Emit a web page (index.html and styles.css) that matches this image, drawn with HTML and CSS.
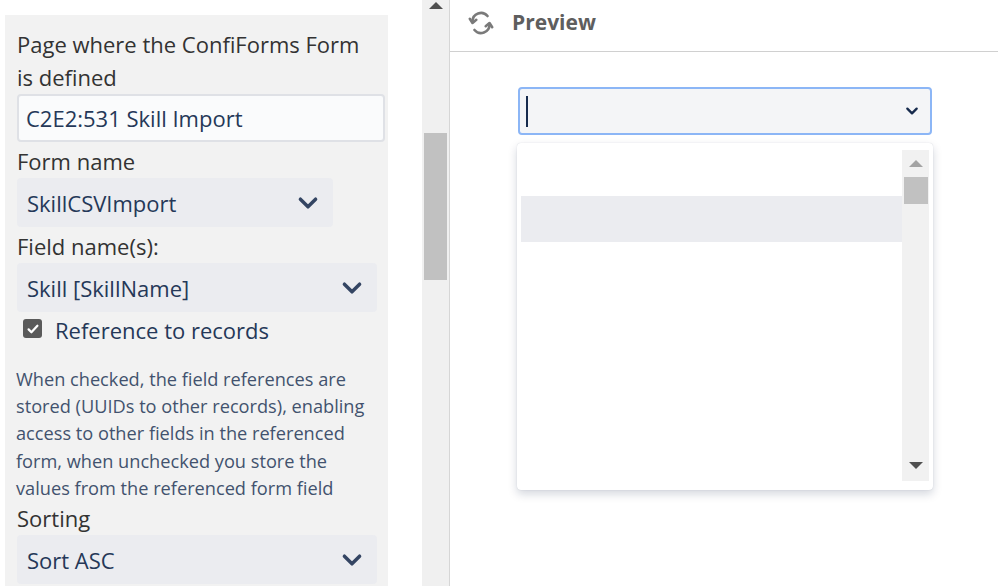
FILE: index.html
```html
<!DOCTYPE html>
<html lang="en">
<head>
<meta charset="utf-8">
<title>ConfiForms field</title>
<link rel="stylesheet" href="styles.css">
</head>
<body>
<div class="app">
  <aside class="sidebar">
    <div class="panel-wrap">
      <div class="panel">
        <div class="label label-first">Page where the ConfiForms Form is defined</div>
        <div class="input">C2E2:531 Skill Import</div>
        <div class="label">Form name</div>
        <div class="select select-short"><span>SkillCSVImport</span><svg class="chev" viewBox="0 0 24 24"><path d="M5 8.5l7 7 7-7"/></svg></div>
        <div class="label">Field name(s):</div>
        <div class="select"><span>Skill [SkillName]</span><svg class="chev" viewBox="0 0 24 24"><path d="M5 8.5l7 7 7-7"/></svg></div>
        <label class="check-row"><span class="checkbox"><svg viewBox="0 0 20 20"><path d="M4.5 10.5l3.5 3.5 7.5-8"/></svg></span><span>Reference to records</span></label>
        <p class="desc">When checked, the field references are stored (UUIDs to other records), enabling access to other fields in the referenced form, when unchecked you store the values from the referenced form field</p>
        <div class="label label-sort">Sorting</div>
        <div class="select"><span>Sort ASC</span><svg class="chev" viewBox="0 0 24 24"><path d="M5 8.5l7 7 7-7"/></svg></div>
      </div>
    </div>
    <div class="scrollbar">
      <div class="sb-up"></div>
      <div class="sb-thumb"></div>
    </div>
  </aside>
  <main class="preview">
    <header class="preview-head">
      <svg class="refresh" viewBox="0 0 26 26"><path d="M4.5 11.5 A8.5 8.5 0 0 1 19.5 6"/><path d="M1.8 8.8 L4.5 13 L8.3 9.8"/><path d="M21.5 14.5 A8.5 8.5 0 0 1 6.5 20"/><path d="M24.2 17.2 L21.5 13 L17.7 16.2"/></svg>
      <h1>Preview</h1>
    </header>
    <div class="preview-body">
      <div class="combo"><span class="caret"></span><svg class="chev-sm" viewBox="0 0 24 24"><path d="M5 8.5l7 7 7-7"/></svg></div>
      <div class="menu">
        <div class="menu-list">
          <div class="opt"></div>
          <div class="opt opt-hover"></div>
        </div>
        <div class="menu-sb">
          <div class="msb-up"></div>
          <div class="msb-thumb"></div>
          <div class="msb-fill"></div>
          <div class="msb-down"></div>
        </div>
      </div>
    </div>
  </main>
</div>
</body>
</html>
```
FILE: styles.css
```css
* { box-sizing: border-box; }
html, body { margin: 0; padding: 0; background: #fff; }
body { font-family: "Open Sans", "Noto Sans", sans-serif; width: 998px; height: 586px; overflow: hidden; }
.app { display: flex; height: 586px; }
.sidebar { width: 450px; flex: none; display: flex; border-right: 1px solid #d6d6d6; }
.panel-wrap { padding: 15px 0 0 5px; width: 422px; }
.panel { width: 383px; height: 100%; background: #f2f2f2; padding: 13px 4px 0 12px; }
.label { font-size: 22px; line-height: 33px; color: #333; margin-top: 3px; max-width: 362px; }
.label-first { margin-top: 0; }
.label-sort { margin-top: 0; }
.input { height: 48px; background: #fafbfc; border: 2px solid #dfe1e6; border-radius: 4px; padding: 0 7px; font-size: 22px; line-height: 44px; color: #253858; width: 368px; }
.select { height: 49px; width: 360px; background: #ebecf0; border-radius: 4px; display: flex; align-items: center; justify-content: space-between; padding: 0 12px 0 10px; font-size: 22px; color: #253858; }
.select-short { width: 316px; }
.chev { width: 26px; height: 26px; fill: none; stroke: #344563; stroke-width: 3.2; stroke-linecap: round; stroke-linejoin: round; }
.check-row { display: flex; align-items: center; height: 34px; padding-left: 6px; gap: 13px; font-size: 22px; color: #253858; margin-top: 1px; }
.checkbox { width: 19px; height: 19px; background: #5a5a5a; border-radius: 3px; display: flex; align-items: center; justify-content: center; margin-top: -3px; }
.checkbox svg { width: 16px; height: 16px; fill: none; stroke: #fff; stroke-width: 2.8; stroke-linecap: round; stroke-linejoin: round; }
.desc { margin: 19px 0 0 -1px; font-size: 18.2px; line-height: 27.2px; color: #42526e; width: 362px; }
.scrollbar { width: 27px; background: #f0f0f0; display: flex; flex-direction: column; align-items: center; }
.sb-up { width: 0; height: 0; border-left: 7px solid transparent; border-right: 7px solid transparent; border-bottom: 7px solid #505050; margin-top: 2px; }
.sb-thumb { width: 23px; height: 147px; background: #c1c1c1; margin-top: 124px; }
.preview { flex: 1; }
.preview-head { height: 52px; border-bottom: 1px solid #d0d0d0; display: flex; align-items: center; padding-left: 18px; gap: 18px; }
.refresh { width: 26px; height: 26px; fill: none; stroke: #7a7a7a; stroke-width: 2.6; stroke-linecap: round; stroke-linejoin: round; margin-top: -6px; }
.preview-head h1 { margin: 0; font-size: 21px; font-weight: 700; color: #5e5e5e; margin-top: -8px; }
.preview-body { padding: 36px 0 0 68px; }
.combo { width: 414px; height: 48px; border: 2px solid #8cb6f6; border-radius: 4px; background: #f4f5f7; display: flex; align-items: center; justify-content: space-between; padding: 0 10px 0 6px; margin-top: -1px; }
.caret { width: 1.5px; height: 31px; background: #172b4d; }
.chev-sm { width: 16px; height: 16px; fill: none; stroke: #172b4d; stroke-width: 3.5; stroke-linecap: round; stroke-linejoin: round; }
.menu { margin: 8px 0 0 -1px; width: 416px; height: 347px; background: #fff; border-radius: 4px; box-shadow: 0 4px 10px rgba(9,30,66,0.18), 0 0 1px rgba(9,30,66,0.2); display: flex; padding: 7px 4px 9px 4px; }
.menu-list { flex: 1; }
.opt { height: 46px; }
.opt-hover { background: #ebecf0; }
.menu-sb { width: 27px; background: #f1f1f1; display: flex; flex-direction: column; align-items: center; }
.msb-up { width: 0; height: 0; border-left: 7px solid transparent; border-right: 7px solid transparent; border-bottom: 7px solid #a3a3a3; margin-top: 10px; }
.msb-thumb { width: 24px; height: 27px; background: #c1c1c1; margin-top: 10px; }
.msb-fill { flex: 1; }
.msb-down { width: 0; height: 0; border-left: 7px solid transparent; border-right: 7px solid transparent; border-top: 7px solid #505050; margin-bottom: 12px; }
```
